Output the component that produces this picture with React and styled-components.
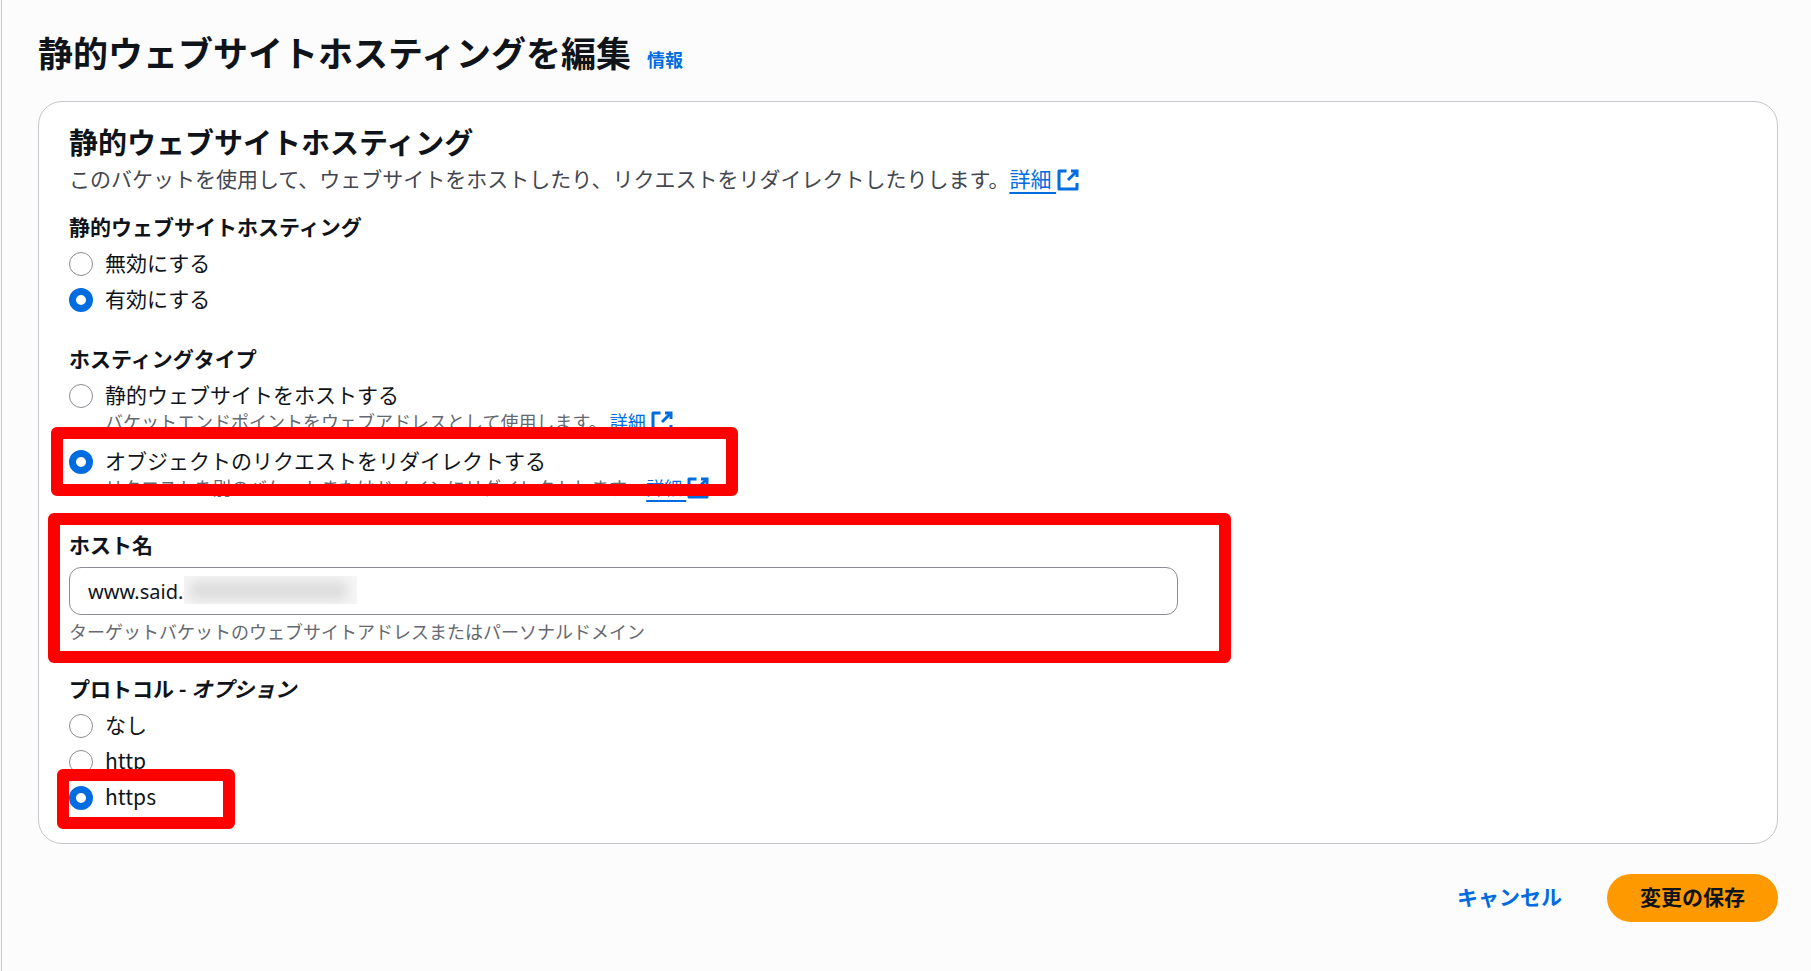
import React, { useState } from 'react';
import styled, { createGlobalStyle } from 'styled-components';

const color = {
  text: '#0f141a',
  muted: '#424650',
  hint: '#656871',
  link: '#006ce0',
  border: '#c6c6cd',
  control: '#8c8c94',
  page: '#fcfcfd',
  primary: '#ff9900',
  mark: '#ff0000',
};

const GlobalStyle = createGlobalStyle`
  *, *::before, *::after { box-sizing: border-box; }
  body {
    margin: 0;
    background: ${color.page};
    color: ${color.text};
    font-family: "Noto Sans CJK JP", "Noto Sans", sans-serif;
    font-size: 21px;
    line-height: 30px;
  }
`;

const Page = styled.main`
  min-height: 100vh;
  margin-left: 1px;
  border-left: 1px solid ${color.border};
  padding: 28px 33px 48px 36px;
`;

const PageHeader = styled.header`
  display: flex;
  align-items: baseline;
  gap: 16px;
  margin-bottom: 26px;
`;

const PageTitle = styled.h1`
  margin: 0;
  font-size: 35px;
  line-height: 47px;
  font-weight: 700;
`;

const InfoLink = styled.a`
  color: ${color.link};
  font-size: 18px;
  line-height: 24px;
  font-weight: 700;
  text-decoration: none;
`;

const Card = styled.section`
  background: #ffffff;
  border: 1px solid ${color.border};
  border-radius: 24px;
  padding: 19px 30px 32px;
`;

const CardHeader = styled.header`
  margin-bottom: 18px;
`;

const CardTitle = styled.h2`
  margin: 0 0 2px;
  font-size: 29px;
  line-height: 40px;
  font-weight: 700;
`;

const CardText = styled.p`
  margin: 0;
  color: ${color.muted};
`;

const FormFields = styled.form`
  display: flex;
  flex-direction: column;
  gap: 30px;
`;

const Fieldset = styled.fieldset`
  margin: 0;
  border: 0;
  padding: 0;
  min-width: 0;
`;

const Legend = styled.legend`
  padding: 0;
  margin-bottom: 6px;
  font-weight: 700;
`;

const Options = styled.div`
  display: flex;
  flex-direction: column;
  align-items: flex-start;
  gap: ${(p) => (p.$roomy ? '12px' : '6px')};
`;

const Option = styled.div`
  position: relative;
  display: grid;
  grid-template-columns: 24px auto;
  column-gap: 12px;
  align-items: start;
`;

const Radio = styled.input`
  appearance: none;
  margin: 5px 0 0;
  width: 24px;
  height: 24px;
  border: 1px solid ${color.control};
  border-radius: 50%;
  background: #ffffff;

  &:checked {
    border: 7px solid ${color.link};
  }
`;

const OptionHint = styled.div`
  grid-column: 2;
  display: flex;
  gap: 3px;
  height: 24px;
  color: ${color.hint};
  font-size: 18px;
  line-height: 24px;
`;

const Link = styled.a`
  color: ${color.link};
  text-decoration: none;
  white-space: nowrap;
`;

const LinkText = styled.span`
  white-space: pre;
  text-decoration: underline;
  text-decoration-thickness: 2px;
  text-underline-offset: 5px;
`;

const Icon = styled.svg`
  width: 24px;
  height: 24px;
  vertical-align: -2px;
  margin: -3px 0;
  fill: none;
  stroke: currentColor;
  stroke-width: 2;
  stroke-linejoin: round;
`;

const FieldGrid = styled.div`
  display: grid;
  grid-template-columns: repeat(3, 1fr);
  column-gap: 30px;
`;

const Field = styled.div`
  position: relative;
  grid-column: span 2;
  display: flex;
  flex-direction: column;
`;

const FieldLabel = styled.label`
  font-weight: 700;
`;

const InputWrap = styled.div`
  position: relative;
  display: flex;
  margin: 8px 0 4px;
`;

const TextInput = styled.input`
  flex: 1;
  min-width: 0;
  height: 48px;
  margin: 0;
  border: 1px solid ${color.control};
  border-radius: 12px;
  padding: 0 18px;
  background: #ffffff;
  color: ${color.text};
  font-family: "Noto Sans", "Noto Sans CJK JP", sans-serif;
  font-size: 20px;
`;

const Redaction = styled.span`
  position: absolute;
  left: 115px;
  top: 9px;
  width: 173px;
  height: 28px;
  overflow: hidden;
  background: #f6f6f6;

  &::before {
    content: "";
    position: absolute;
    inset: 5px 10px 4px 6px;
    background: #dcdcdc;
    filter: blur(6px);
  }
`;

const FieldHint = styled.p`
  margin: 0;
  color: ${color.hint};
  font-size: 18px;
  line-height: 24px;
`;

const Highlight = styled.div`
  position: absolute;
  z-index: 1;
  top: ${(p) => p.$top}px;
  left: ${(p) => p.$left}px;
  ${(p) => (p.$right !== undefined ? `right: ${p.$right}px;` : `width: ${p.$width}px;`)}
  height: ${(p) => p.$height}px;
  border: 12px solid ${color.mark};
  border-radius: 6px;
  pointer-events: none;
`;

const Actions = styled.footer`
  display: flex;
  justify-content: flex-end;
  gap: 12px;
  margin-top: 30px;
`;

const Button = styled.button`
  height: 48px;
  border: 0;
  border-radius: 24px;
  padding: 0 33px 4px;
  background: ${(p) => (p.$primary ? color.primary : 'transparent')};
  color: ${(p) => (p.$primary ? color.text : color.link)};
  font: inherit;
  font-weight: 700;
  cursor: pointer;
`;

function ExternalLink() {
  return (
    <Link href="#details">
      <LinkText>{'詳細 '}</LinkText>
      <Icon viewBox="0 0 16 16" aria-hidden="true">
        <path d="M10 2h4v4" strokeLinejoin="miter" />
        <path d="m8 8 6-6" />
        <path d="M14 10v4H2V2h5" />
      </Icon>
    </Link>
  );
}

function RadioOption({ id, name, value, selected, onSelect, label, hint, children }) {
  return (
    <Option>
      <Radio
        type="radio"
        id={id}
        name={name}
        value={value}
        checked={selected === value}
        onChange={() => onSelect(value)}
      />
      <label htmlFor={id}>{label}</label>
      {hint && (
        <OptionHint>
          {hint}
          <ExternalLink />
        </OptionHint>
      )}
      {children}
    </Option>
  );
}

export default function App() {
  const [hosting, setHosting] = useState('enable');
  const [type, setType] = useState('redirect');
  const [protocol, setProtocol] = useState('https');
  const [host, setHost] = useState('www.said.');

  return (
    <>
      <GlobalStyle />
      <Page lang="ja">
        <PageHeader>
          <PageTitle>静的ウェブサイトホスティングを編集</PageTitle>
          <InfoLink href="#info">情報</InfoLink>
        </PageHeader>

        <Card>
          <CardHeader>
            <CardTitle>静的ウェブサイトホスティング</CardTitle>
            <CardText>
              このバケットを使用して、ウェブサイトをホストしたり、リクエストをリダイレクトしたりします。
              <ExternalLink />
            </CardText>
          </CardHeader>

          <FormFields id="hosting-form" onSubmit={(e) => e.preventDefault()}>
            <Fieldset>
              <Legend>静的ウェブサイトホスティング</Legend>
              <Options>
                <RadioOption id="hosting-disable" name="hosting" value="disable" selected={hosting} onSelect={setHosting} label="無効にする" />
                <RadioOption id="hosting-enable" name="hosting" value="enable" selected={hosting} onSelect={setHosting} label="有効にする" />
              </Options>
            </Fieldset>

            <Fieldset>
              <Legend>ホスティングタイプ</Legend>
              <Options $roomy>
                <RadioOption
                  id="type-host"
                  name="type"
                  value="host"
                  selected={type}
                  onSelect={setType}
                  label="静的ウェブサイトをホストする"
                  hint="バケットエンドポイントをウェブアドレスとして使用します。"
                />
                <RadioOption
                  id="type-redirect"
                  name="type"
                  value="redirect"
                  selected={type}
                  onSelect={setType}
                  label="オブジェクトのリクエストをリダイレクトする"
                  hint="リクエストを別のバケットまたはドメインにリダイレクトします。"
                >
                  <Highlight $top={-18} $left={-18} $width={687} $height={69} />
                </RadioOption>
              </Options>
            </Fieldset>

            <FieldGrid>
              <Field>
                <FieldLabel htmlFor="host">ホスト名</FieldLabel>
                <InputWrap>
                  <TextInput
                    id="host"
                    type="text"
                    value={host}
                    onChange={(e) => setHost(e.target.value)}
                    aria-describedby="host-hint"
                  />
                  <Redaction aria-hidden="true" />
                </InputWrap>
                <FieldHint id="host-hint">
                  ターゲットバケットのウェブサイトアドレスまたはパーソナルドメイン
                </FieldHint>
                <Highlight $top={-16} $left={-21} $right={-53} $height={150} />
              </Field>
            </FieldGrid>

            <Fieldset>
              <Legend>
                プロトコル - <em>オプション</em>
              </Legend>
              <Options>
                <RadioOption id="protocol-none" name="protocol" value="none" selected={protocol} onSelect={setProtocol} label="なし" />
                <RadioOption id="protocol-http" name="protocol" value="http" selected={protocol} onSelect={setProtocol} label="http" />
                <RadioOption id="protocol-https" name="protocol" value="https" selected={protocol} onSelect={setProtocol} label="https">
                  <Highlight $top={-12} $left={-12} $width={178} $height={60} />
                </RadioOption>
              </Options>
            </Fieldset>
          </FormFields>
        </Card>

        <Actions>
          <Button type="button">キャンセル</Button>
          <Button type="submit" form="hosting-form" $primary>
            変更の保存
          </Button>
        </Actions>
      </Page>
    </>
  );
}
